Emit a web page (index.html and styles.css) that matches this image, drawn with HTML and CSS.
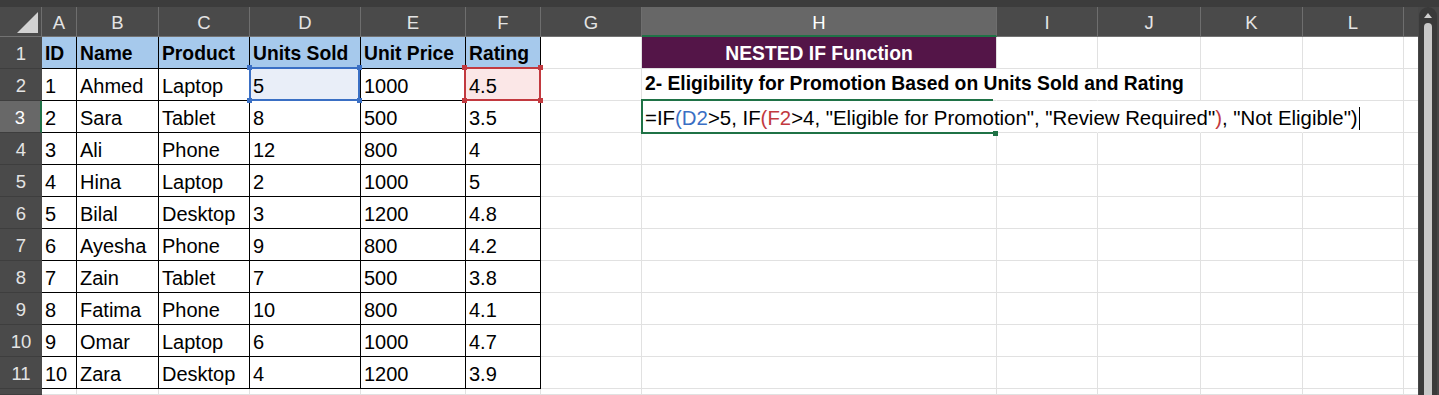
FILE: index.html
```html
<!DOCTYPE html>
<html>
<head>
<meta charset="utf-8">
<link rel="stylesheet" href="styles.css">
</head>
<body>
<div class="app">
  <div class="topstrip"></div>
  <div class="main">
    <div class="sheet">
      <!-- column headers -->
      <div class="corner"><svg width="42" height="30" viewBox="0 0 42 30"><polygon points="17,26 38,26 38,5" fill="#d2d2d2"/></svg></div>
      <div class="ch">A</div><div class="ch">B</div><div class="ch">C</div><div class="ch">D</div><div class="ch">E</div><div class="ch">F</div><div class="ch">G</div><div class="ch selc">H</div><div class="ch">I</div><div class="ch">J</div><div class="ch">K</div><div class="ch">L</div><div class="ch m"></div>

      <!-- row 1 -->
      <div class="rh">1</div>
      <div class="cell t hd">ID</div><div class="cell t hd">Name</div><div class="cell t hd">Product</div><div class="cell t hd">Units Sold</div><div class="cell t hd">Unit Price</div><div class="cell t hd">Rating</div>
      <div class="cell"></div><div class="cell purple">NESTED IF Function</div><div class="cell"></div><div class="cell"></div><div class="cell"></div><div class="cell"></div><div class="cell m"></div>

      <!-- row 2 -->
      <div class="rh">2</div>
      <div class="cell t">1</div><div class="cell t">Ahmed</div><div class="cell t">Laptop</div>
      <div class="cell t selD">5<div class="selbox blue"><i class="k tl"></i><i class="k tr"></i><i class="k bl"></i><i class="k br"></i></div></div>
      <div class="cell t">1000</div>
      <div class="cell t selF">4.5<div class="selbox red"><i class="k tl"></i><i class="k tr"></i><i class="k bl"></i><i class="k br"></i></div></div>
      <div class="cell"></div><div class="cell title ov">2- Eligibility for Promotion Based on Units Sold and Rating</div><div class="cell ov"></div><div class="cell"></div><div class="cell"></div><div class="cell"></div><div class="cell m"></div>

      <!-- row 3 -->
      <div class="rh selr">3</div>
      <div class="cell t">2</div><div class="cell t">Sara</div><div class="cell t">Tablet</div><div class="cell t">8</div><div class="cell t">500</div><div class="cell t">3.5</div>
      <div class="cell"></div><div class="cell active ov formula">=IF<span class="b">(D2</span>&gt;5, IF<span class="r">(F2</span>&gt;4, "Eligible for Promotion", "Review Required"<span class="r">)</span>, "Not Eligible")<span class="caret"></span></div><div class="cell ov"></div><div class="cell ov"></div><div class="cell ov"></div><div class="cell"></div><div class="cell m"></div>

      <!-- row 4 -->
      <div class="rh">4</div>
      <div class="cell t">3</div><div class="cell t">Ali</div><div class="cell t">Phone</div><div class="cell t">12</div><div class="cell t">800</div><div class="cell t">4</div>
      <div class="cell"></div><div class="cell"></div><div class="cell"></div><div class="cell"></div><div class="cell"></div><div class="cell"></div><div class="cell m"></div>

      <!-- row 5 -->
      <div class="rh">5</div>
      <div class="cell t">4</div><div class="cell t">Hina</div><div class="cell t">Laptop</div><div class="cell t">2</div><div class="cell t">1000</div><div class="cell t">5</div>
      <div class="cell"></div><div class="cell"></div><div class="cell"></div><div class="cell"></div><div class="cell"></div><div class="cell"></div><div class="cell m"></div>

      <!-- row 6 -->
      <div class="rh">6</div>
      <div class="cell t">5</div><div class="cell t">Bilal</div><div class="cell t">Desktop</div><div class="cell t">3</div><div class="cell t">1200</div><div class="cell t">4.8</div>
      <div class="cell"></div><div class="cell"></div><div class="cell"></div><div class="cell"></div><div class="cell"></div><div class="cell"></div><div class="cell m"></div>

      <!-- row 7 -->
      <div class="rh">7</div>
      <div class="cell t">6</div><div class="cell t">Ayesha</div><div class="cell t">Phone</div><div class="cell t">9</div><div class="cell t">800</div><div class="cell t">4.2</div>
      <div class="cell"></div><div class="cell"></div><div class="cell"></div><div class="cell"></div><div class="cell"></div><div class="cell"></div><div class="cell m"></div>

      <!-- row 8 -->
      <div class="rh">8</div>
      <div class="cell t">7</div><div class="cell t">Zain</div><div class="cell t">Tablet</div><div class="cell t">7</div><div class="cell t">500</div><div class="cell t">3.8</div>
      <div class="cell"></div><div class="cell"></div><div class="cell"></div><div class="cell"></div><div class="cell"></div><div class="cell"></div><div class="cell m"></div>

      <!-- row 9 -->
      <div class="rh">9</div>
      <div class="cell t">8</div><div class="cell t">Fatima</div><div class="cell t">Phone</div><div class="cell t">10</div><div class="cell t">800</div><div class="cell t">4.1</div>
      <div class="cell"></div><div class="cell"></div><div class="cell"></div><div class="cell"></div><div class="cell"></div><div class="cell"></div><div class="cell m"></div>

      <!-- row 10 -->
      <div class="rh">10</div>
      <div class="cell t">9</div><div class="cell t">Omar</div><div class="cell t">Laptop</div><div class="cell t">6</div><div class="cell t">1000</div><div class="cell t">4.7</div>
      <div class="cell"></div><div class="cell"></div><div class="cell"></div><div class="cell"></div><div class="cell"></div><div class="cell"></div><div class="cell m"></div>

      <!-- row 11 -->
      <div class="rh">11</div>
      <div class="cell t">10</div><div class="cell t">Zara</div><div class="cell t">Desktop</div><div class="cell t">4</div><div class="cell t">1200</div><div class="cell t">3.9</div>
      <div class="cell"></div><div class="cell"></div><div class="cell"></div><div class="cell"></div><div class="cell"></div><div class="cell"></div><div class="cell m"></div>

      <!-- row 12 (partial) -->
      <div class="rh"></div>
      <div class="cell"></div><div class="cell"></div><div class="cell"></div><div class="cell"></div><div class="cell"></div><div class="cell"></div>
      <div class="cell"></div><div class="cell"></div><div class="cell"></div><div class="cell"></div><div class="cell"></div><div class="cell"></div><div class="cell m"></div>
    </div>
    <div class="vscroll">
      <div class="track">
        <div class="arrow"></div>
        <div class="thumb"></div>
      </div>
    </div>
  </div>
</div>
</body>
</html>
```

FILE: styles.css
```css
html, body {
  margin: 0;
  padding: 0;
  background: #ffffff;
  overflow: hidden;
}

body {
  font-family: "Liberation Sans", Arial, sans-serif;
  color: #000;
}

.app {
  width: 1439px;
  height: 395px;
  display: flex;
  flex-direction: column;
}

.topstrip {
  height: 7px;
  background: #3c3c3c;
}

.main {
  display: flex;
  height: 388px;
}

.sheet {
  width: 1418px;
  display: grid;
  grid-template-columns: 42px 35px 82px 91px 111px 105px 75px 101px 355px 101px 103px 102px 101px 14px;
  grid-template-rows: 30px repeat(11, 32px) 6px;
  background: #ffffff;
  overflow: hidden;
}

/* headers */
.corner {
  background: #4a4a4a;
  border-right: 1px solid #6e6e6e;
  border-bottom: 1px solid #727272;
  box-sizing: border-box;
  line-height: 0;
}

.ch {
  box-sizing: border-box;
  background: #4a4a4a;
  color: #e4e4e4;
  font-size: 18.5px;
  line-height: 29px;
  padding-top: 1px;
  text-align: center;
  border-right: 1px solid #6e6e6e;
  border-bottom: 1px solid #727272;
}

.ch.selc {
  background: #676767;
  color: #ffffff;
  border-bottom: 2px solid #1f7246;
}

.ch.m {
  border-right: none;
}

.rh {
  box-sizing: border-box;
  background: #4a4a4a;
  color: #e4e4e4;
  font-size: 18.5px;
  line-height: 30px;
  padding-top: 2px;
  text-align: center;
  border-bottom: 1px solid #3e3e3e;
}

.rh.selr {
  background: #686868;
  color: #ffffff;
  border-right: 2px solid #1f7246;
}

/* cells */
.cell {
  box-sizing: border-box;
  border-right: 1px solid #e1e1e1;
  border-bottom: 1px solid #e1e1e1;
  font-size: 20px;
  line-height: 30px;
  padding: 2px 0 0 3px;
  white-space: nowrap;
}

.cell.m {
  border-right: none;
}

.cell.t {
  border-right-color: #000;
  border-bottom-color: #000;
}

.cell.hd {
  background: #a6c9ec;
  font-weight: bold;
  font-size: 19.3px;
}

.cell.purple {
  background: #541548;
  color: #ffffff;
  font-weight: bold;
  font-size: 19.3px;
  text-align: center;
  padding-left: 0;
}

.cell.title {
  font-weight: bold;
  font-size: 19.3px;
  padding-top: 0;
}

.cell.ov {
  border-right-color: transparent;
}

.cell.formula {
  font-size: 20.4px;
}

.b { color: #3a6fc4; }
.r { color: #c2393f; }

.caret {
  display: inline-block;
  width: 1px;
  height: 23px;
  background: #000;
  vertical-align: -5px;
  margin-left: 1px;
}

/* selections */
.selD {
  position: relative;
  background: #e9eef8;
}

.selF {
  position: relative;
  background: #fbe7e7;
}

.selbox {
  position: absolute;
  top: -2px;
  height: 34px;
  box-sizing: border-box;
  border: 2px solid currentColor;
}

.selbox.blue {
  color: #3a6fc4;
  left: -1px;
  width: 111px;
}

.selbox.red {
  color: #c2393f;
  left: -2px;
  width: 77px;
}

.k {
  position: absolute;
  width: 5px;
  height: 5px;
  background: currentColor;
}

.k.tl { left: -4px; top: -4px; }
.k.tr { right: -4px; top: -4px; }
.k.bl { left: -4px; bottom: -4px; }
.k.br { right: -4px; bottom: -4px; }

.active {
  position: relative;
}

.active::before {
  content: "";
  position: absolute;
  left: -1px;
  top: -2px;
  width: 352px;
  height: 35px;
  box-sizing: border-box;
  border: 2px solid #1f7246;
  border-right: none;
  pointer-events: none;
}

.active::after {
  content: "";
  position: absolute;
  left: 351px;
  top: 30px;
  width: 5px;
  height: 5px;
  background: #1f7246;
}

/* scrollbar */
.vscroll {
  width: 21px;
  background: #474747;
}

.track {
  margin-left: 1px;
  width: 18px;
  height: 100%;
  background: #3a3a3a;
  border-radius: 9px 9px 0 0;
  display: flex;
  flex-direction: column;
  align-items: center;
}

.arrow {
  margin-top: 6px;
  width: 0;
  height: 0;
  border-left: 4px solid transparent;
  border-right: 4px solid transparent;
  border-bottom: 5px solid #cfcfcf;
}

.thumb {
  margin-top: 5px;
  width: 8px;
  flex: 1;
  background: #c8c8c8;
  border-radius: 4px 4px 0 0;
}
```
